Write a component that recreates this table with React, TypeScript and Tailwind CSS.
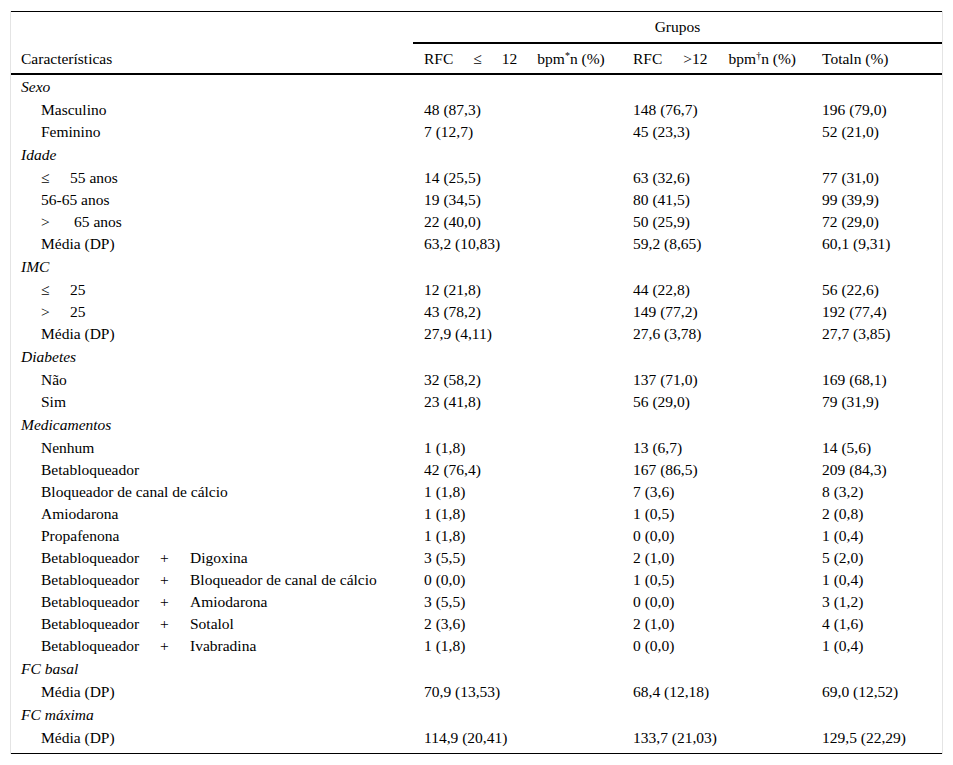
type Row =
  | { kind: "cat"; label: string }
  | { kind: "data"; label: React.ReactNode; a: string; b: string; c: string };

const sym = (s: string, w: string, rest: string) => (
  <>
    <span className={`inline-block ${w}`}>{s}</span>
    {rest}
  </>
);

const combo = (drug: string) => (
  <>
    <span className="inline-block w-[119px]">Betabloqueador</span>
    <span className="inline-block w-[30px]">+</span>
    {drug}
  </>
);

const ROWS: Row[] = [
  { kind: "cat", label: "Sexo" },
  { kind: "data", label: "Masculino", a: "48 (87,3)", b: "148 (76,7)", c: "196 (79,0)" },
  { kind: "data", label: "Feminino", a: "7 (12,7)", b: "45 (23,3)", c: "52 (21,0)" },
  { kind: "cat", label: "Idade" },
  { kind: "data", label: sym("≤", "w-[29px]", "55 anos"), a: "14 (25,5)", b: "63 (32,6)", c: "77 (31,0)" },
  { kind: "data", label: "56-65 anos", a: "19 (34,5)", b: "80 (41,5)", c: "99 (39,9)" },
  { kind: "data", label: sym(">", "w-[33px]", "65 anos"), a: "22 (40,0)", b: "50 (25,9)", c: "72 (29,0)" },
  { kind: "data", label: "Média (DP)", a: "63,2 (10,83)", b: "59,2 (8,65)", c: "60,1 (9,31)" },
  { kind: "cat", label: "IMC" },
  { kind: "data", label: sym("≤", "w-[29px]", "25"), a: "12 (21,8)", b: "44 (22,8)", c: "56 (22,6)" },
  { kind: "data", label: sym(">", "w-[29px]", "25"), a: "43 (78,2)", b: "149 (77,2)", c: "192 (77,4)" },
  { kind: "data", label: "Média (DP)", a: "27,9 (4,11)", b: "27,6 (3,78)", c: "27,7 (3,85)" },
  { kind: "cat", label: "Diabetes" },
  { kind: "data", label: "Não", a: "32 (58,2)", b: "137 (71,0)", c: "169 (68,1)" },
  { kind: "data", label: "Sim", a: "23 (41,8)", b: "56 (29,0)", c: "79 (31,9)" },
  { kind: "cat", label: "Medicamentos" },
  { kind: "data", label: "Nenhum", a: "1 (1,8)", b: "13 (6,7)", c: "14 (5,6)" },
  { kind: "data", label: "Betabloqueador", a: "42 (76,4)", b: "167 (86,5)", c: "209 (84,3)" },
  { kind: "data", label: "Bloqueador de canal de cálcio", a: "1 (1,8)", b: "7 (3,6)", c: "8 (3,2)" },
  { kind: "data", label: "Amiodarona", a: "1 (1,8)", b: "1 (0,5)", c: "2 (0,8)" },
  { kind: "data", label: "Propafenona", a: "1 (1,8)", b: "0 (0,0)", c: "1 (0,4)" },
  { kind: "data", label: combo("Digoxina"), a: "3 (5,5)", b: "2 (1,0)", c: "5 (2,0)" },
  { kind: "data", label: combo("Bloqueador de canal de cálcio"), a: "0 (0,0)", b: "1 (0,5)", c: "1 (0,4)" },
  { kind: "data", label: combo("Amiodarona"), a: "3 (5,5)", b: "0 (0,0)", c: "3 (1,2)" },
  { kind: "data", label: combo("Sotalol"), a: "2 (3,6)", b: "2 (1,0)", c: "4 (1,6)" },
  { kind: "data", label: combo("Ivabradina"), a: "1 (1,8)", b: "0 (0,0)", c: "1 (0,4)" },
  { kind: "cat", label: "FC basal" },
  { kind: "data", label: "Média (DP)", a: "70,9 (13,53)", b: "68,4 (12,18)", c: "69,0 (12,52)" },
  { kind: "cat", label: "FC máxima" },
  { kind: "data", label: "Média (DP)", a: "114,9 (20,41)", b: "133,7 (21,03)", c: "129,5 (22,29)" },
];

const COLS = "grid grid-cols-[402px_210px_189px_130px]";

export default function App() {
  return (
    <div className="min-h-screen bg-white pt-[11px] pl-[10px] font-['Liberation_Serif',serif] text-[15.5px] text-black">
      <div className="w-[933px] border-x border-[#e4e4e4]">
        {/* header */}
        <div className={`${COLS} border-t border-black`}>
          <div />
          <div className="col-span-3 flex h-[32px] items-center justify-center border-b-2 border-black pb-[1px]">
            Grupos
          </div>
        </div>
        <div className={`${COLS} h-[31px] items-center border-b-2 border-black`}>
          <div className="pl-[10px]">Características</div>
          <div className="whitespace-nowrap pl-[11px]">
            RFC<span className="ml-[20px]">≤</span>
            <span className="ml-[20px]">12</span>
            <span className="ml-[20px]">bpm</span>
            <sup className="text-[10px]">*</sup>n (%)
          </div>
          <div className="whitespace-nowrap pl-[10px]">
            RFC<span className="ml-[21px]">&gt;12</span>
            <span className="ml-[21px]">bpm</span>
            <sup className="text-[10px]">†</sup>n (%)
          </div>
          <div className="pl-[10px]">Totaln (%)</div>
        </div>

        {/* body */}
        <div className="border-b border-black pb-[4px]">
          {ROWS.map((r, i) =>
            r.kind === "cat" ? (
              <div key={i} className="h-[24px] pl-[10px] italic leading-[23px]">
                {r.label}
              </div>
            ) : (
              <div key={i} className={`${COLS} h-[22px] leading-[21px] whitespace-nowrap`}>
                <div className="pl-[30px]">{r.label}</div>
                <div className="pl-[11px]">{r.a}</div>
                <div className="pl-[10px]">{r.b}</div>
                <div className="pl-[10px]">{r.c}</div>
              </div>
            )
          )}
        </div>
      </div>
    </div>
  );
}
